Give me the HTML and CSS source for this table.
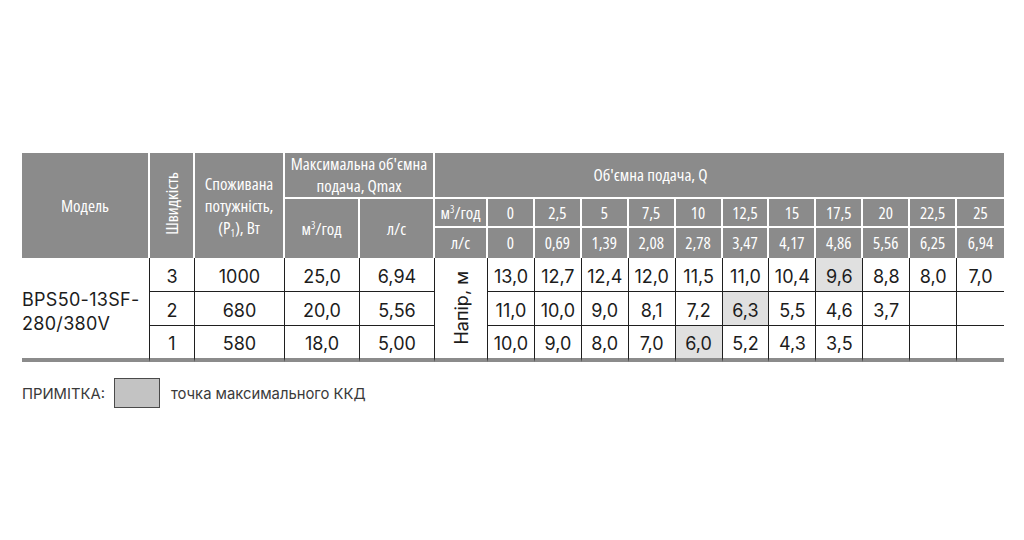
FILE: index.html
```html
<!DOCTYPE html>
<html lang="uk">
<head>
<meta charset="utf-8">
<title>BPS50-13SF</title>
<link rel="stylesheet" href="styles.css">
</head>
<body>
<main class="page">
  <table class="spec">
    <colgroup>
      <col class="c-model"><col class="c-speed"><col class="c-power"><col class="c-qm"><col class="c-ql"><col class="c-unit">
      <col><col><col><col><col><col><col><col><col><col><col>
    </colgroup>
    <thead>
      <tr class="h1">
        <th rowspan="3">Модель</th>
        <th rowspan="3"><span class="vert">Швидкість</span></th>
        <th rowspan="3">Споживана<br>потужність,<br>(P<sub>1</sub>), Вт</th>
        <th colspan="2">Максимальна об'ємна<br>подача, Qmax</th>
        <th colspan="12" class="last flow">Об'ємна подача, Q</th>
      </tr>
      <tr class="h2">
        <th rowspan="2">м<sup>3</sup>/год</th>
        <th rowspan="2">л/с</th>
        <th>м<sup>3</sup>/год</th>
        <th>0</th><th>2,5</th><th>5</th><th>7,5</th><th>10</th><th>12,5</th><th>15</th><th>17,5</th><th>20</th><th>22,5</th><th class="last">25</th>
      </tr>
      <tr class="h3">
        <th>л/с</th>
        <th>0</th><th>0,69</th><th>1,39</th><th>2,08</th><th>2,78</th><th>3,47</th><th>4,17</th><th>4,86</th><th>5,56</th><th>6,25</th><th class="last">6,94</th>
      </tr>
    </thead>
    <tbody>
      <tr class="b1">
        <td rowspan="3" class="model">BPS50-13SF-<br>280/380V</td>
        <td>3</td><td>1000</td><td>25,0</td><td>6,94</td>
        <td rowspan="3" class="head"><span class="vert">Напір, м</span></td>
        <td>13,0</td><td>12,7</td><td>12,4</td><td>12,0</td><td>11,5</td><td>11,0</td><td>10,4</td><td class="peak">9,6</td><td>8,8</td><td>8,0</td><td class="last">7,0</td>
      </tr>
      <tr class="b2">
        <td>2</td><td>680</td><td>20,0</td><td>5,56</td>
        <td>11,0</td><td>10,0</td><td>9,0</td><td>8,1</td><td>7,2</td><td class="peak">6,3</td><td>5,5</td><td>4,6</td><td>3,7</td><td></td><td class="last"></td>
      </tr>
      <tr class="b3">
        <td>1</td><td>580</td><td>18,0</td><td>5,00</td>
        <td>10,0</td><td>9,0</td><td>8,0</td><td>7,0</td><td class="peak">6,0</td><td>5,2</td><td>4,3</td><td>3,5</td><td></td><td></td><td class="last"></td>
      </tr>
    </tbody>
  </table>

  <div class="note">
    <span class="note-label">ПРИМІТКА:</span>
    <span class="note-swatch"></span>
    <span class="note-text">точка максимального ККД</span>
  </div>
</main>
</body>
</html>
```
FILE: styles.css
```css
* { box-sizing: border-box; }
html, body { margin: 0; padding: 0; background: #fff; }
body { width: 1024px; height: 540px; overflow: hidden; font-family: "Inter", "Noto Sans", sans-serif; color: #1c1c1c; }

.page { padding: 153px 20px 0 22px; }

.spec {
  width: 982px;
  table-layout: fixed;
  border-collapse: separate;
  border-spacing: 0;
}
.c-model { width: 128px; }
.c-speed { width: 45px; }
.c-power { width: 90px; }
.c-qm { width: 75px; }
.c-ql { width: 75px; }
.c-unit { width: 53px; }

.spec th {
  background: #8b8b8b;
  color: #fff;
  font-family: "Open Sans", sans-serif;
  font-stretch: 75%;
  font-weight: 500;
  font-size: 17px;
  line-height: 22px;
  padding: 0;
  text-align: center;
  vertical-align: middle;
  border-right: 2px solid #fff;
  border-bottom: 2px solid #fff;
  white-space: nowrap;
}
.spec thead tr.h3 th { border-bottom: 0; }
.spec thead tr.h1 th[rowspan], .spec thead tr.h2 th[rowspan] { border-bottom: 0; }
.spec th.last { border-right: 0; }
.spec th.flow { padding-right: 138px; }
.h1 { height: 46px; }
.h2 { height: 29px; }
.h3 { height: 30px; }

.spec sup { font-size: 0.6em; vertical-align: 0.55em; line-height: 0; }
.spec sub { font-size: 0.6em; vertical-align: -0.3em; line-height: 0; }

.vert {
  display: inline-block;
  writing-mode: vertical-rl;
  transform: rotate(180deg);
}

.spec td {
  font-size: 18px;
  padding: 3px 0 0;
  text-align: center;
  vertical-align: middle;
  border-right: 1px solid #1f1f1f;
  border-bottom: 1px solid #1f1f1f;
  white-space: nowrap;
}
.spec td.last { border-right: 0; }
.spec td.model { text-align: left; line-height: 24px; padding-top: 8px; letter-spacing: 0.3px; border-bottom: 4px solid #8b8b8b; }
.spec td.head { border-bottom: 4px solid #8b8b8b; }
.spec tr.b3 td { border-bottom: 4px solid #8b8b8b; }
.b1 { height: 34px; }
.b2 { height: 34px; }
.b3 { height: 36px; }
.spec td.peak { background: #e0e0e0; }

.note {
  display: flex;
  align-items: center;
  margin-top: 16px;
  font-size: 14.8px;
  color: #3a3a3a;
}
.note-label { padding-top: 2px; }
.note-text { padding-top: 2px; }
.note-swatch {
  width: 46px;
  height: 30px;
  background: #c3c3c3;
  border: 1px solid #4a4a4a;
  margin: 0 11px 0 9px;
}
```
